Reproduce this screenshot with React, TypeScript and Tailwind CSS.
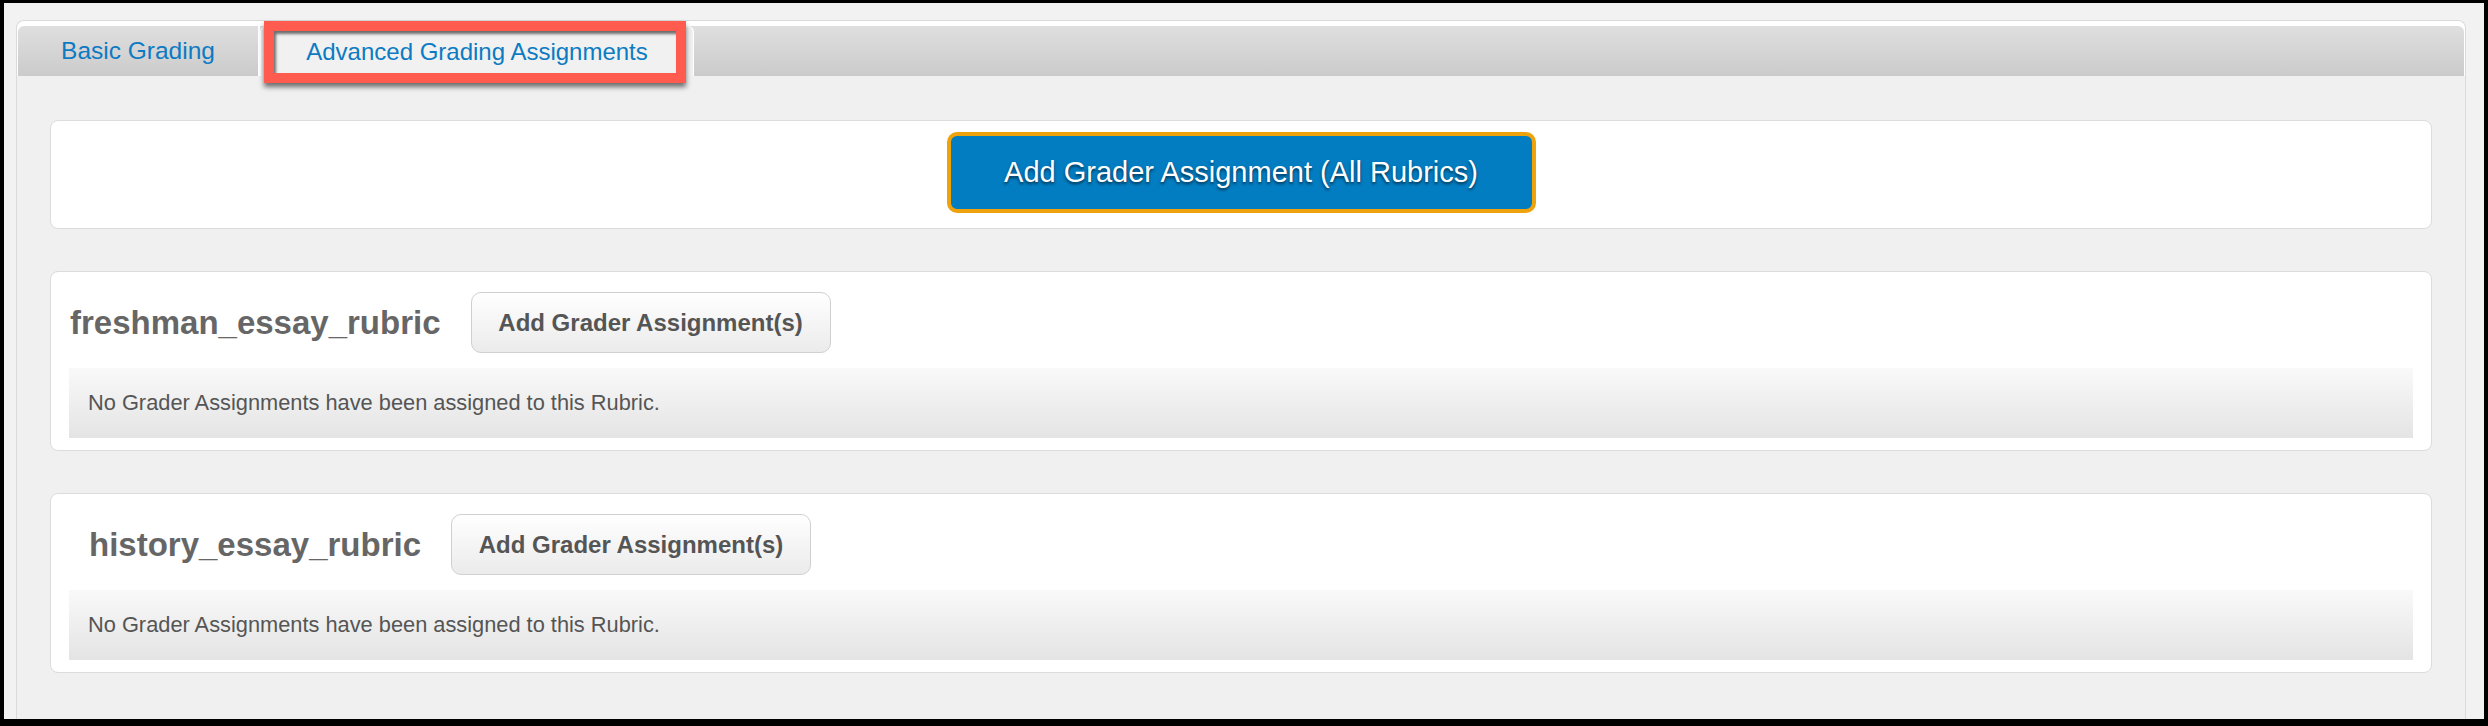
// Grading settings panel: tab strip plus per-rubric grader assignment cards.
const sans = "font-['Liberation_Sans',Arial,sans-serif]";

const rubrics = [
  { name: "freshman_essay_rubric", indent: "pl-[19px]" },
  { name: "history_essay_rubric", indent: "pl-[38px]" },
];

function Tabs() {
  return (
    <div className="bg-white px-px pt-[5px] rounded-t-[7px]">
      <div className="h-[50px] flex items-stretch rounded-t-[6px] bg-gradient-to-b from-[#dfdfdf] to-[#cbcbcb]">
        <div className="w-[242px] flex items-center justify-center rounded-tl-[6px] border-r-2 border-white">
          <span className={`${sans} text-[24.5px] text-[#0c7bc3]`}>Basic Grading</span>
        </div>
        <div className="relative w-[434px] flex items-center justify-center rounded-t-[6px] bg-[#f1f1f1] border-x border-t border-white">
          <span className={`${sans} text-[24px] text-[#0c7bc3]`}>Advanced Grading Assignments</span>
          <div className="absolute left-[3px] right-[7px] -top-[6px] -bottom-[7px] border-[10px] border-[#ff5b4e] shadow-[0_4px_5px_rgba(0,0,0,0.55),inset_2px_3px_3px_rgba(0,0,0,0.55)] pointer-events-none" />
        </div>
      </div>
    </div>
  );
}

function RubricCard({ name, indent }: { name: string; indent: string }) {
  return (
    <div className="mt-[42px] bg-white border border-[#dcdcdc] rounded-[8px] pt-[20px] pb-[12px]">
      <div className={`flex items-center gap-[30px] ${indent}`}>
        <h2 className={`${sans} font-bold text-[33px] leading-none text-[#666666]`}>{name}</h2>
        <button className={`${sans} w-[360px] h-[61px] rounded-[10px] border border-[#d0d0d0] bg-gradient-to-b from-white to-[#ebebeb] font-bold text-[24px] text-[#555555]`}>
          Add Grader Assignment(s)
        </button>
      </div>
      <div className="mx-[18px] mt-[15px] h-[70px] flex items-center pl-[19px] bg-gradient-to-b from-[#f9f9f9] to-[#e4e4e4]">
        <span className={`${sans} text-[21.8px] text-[#555555]`}>
          No Grader Assignments have been assigned to this Rubric.
        </span>
      </div>
    </div>
  );
}

export default function App() {
  return (
    <div className="w-[2488px] h-[726px] bg-black pt-[3px] px-[4px] pb-[7px] flex">
      <div className="flex-1 bg-[#f2f2f2] pt-[17px] pl-[12px] pr-[18px] overflow-hidden flex flex-col">
        <div className="flex-1 border-x border-t border-[#dadada] rounded-t-[8px] bg-[#f0f0f0]">
          <Tabs />
          <div className="px-[33px] pt-[44px]">
            <div className="h-[109px] bg-white border border-[#dcdcdc] rounded-[8px] flex justify-center pt-[11px]">
              <button className={`${sans} w-[589px] h-[81px] rounded-[10px] border-[4px] border-[#eea20b] bg-[#027dc2] text-white text-[29px] [text-shadow:0_2px_3px_rgba(0,0,0,0.6)]`}>
                Add Grader Assignment (All Rubrics)
              </button>
            </div>
            {rubrics.map((r) => (
              <RubricCard key={r.name} name={r.name} indent={r.indent} />
            ))}
          </div>
        </div>
      </div>
    </div>
  );
}
